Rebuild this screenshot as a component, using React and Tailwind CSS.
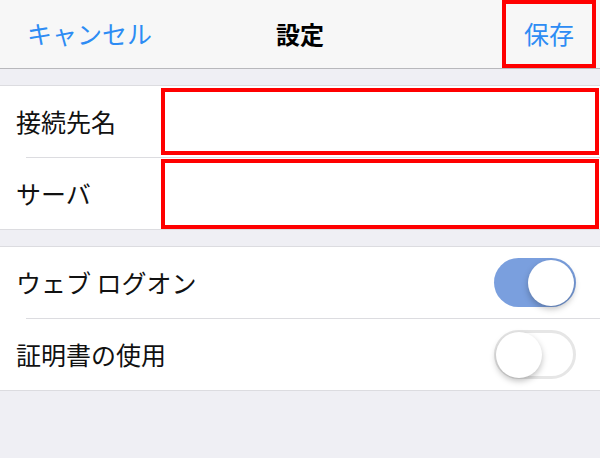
import React, { useState } from "react";

const FONT = { fontFamily: '"Noto Sans CJK JP", "Noto Sans", sans-serif' };

const Toggle = ({ on, onChange }) => (
  <button
    onClick={() => onChange(!on)}
    className={`relative w-[82px] h-[49px] rounded-full shrink-0 ${
      on ? "bg-[#7a9fde]" : "bg-white border-[3px] border-[#e6e6e6]"
    }`}
  >
    <span
      className={`absolute top-1/2 -translate-y-1/2 w-[46px] h-[46px] rounded-full bg-white shadow-[0_3px_6px_rgba(0,0,0,0.25)] ${
        on ? "right-[2px]" : "left-[-1px]"
      }`}
    ></span>
  </button>
);

export default function App() {
  const [webLogon, setWebLogon] = useState(true);
  const [useCert, setUseCert] = useState(false);

  return (
    <div className="w-[600px] h-[458px] bg-[#efeff4] overflow-hidden" style={FONT}>
      {/* Nav bar */}
      <div className="relative h-[69px] bg-[#f7f7f7] border-b border-[#b8b8bc] flex items-center justify-between">
        <button className="pl-[27px] text-[25px] text-[#2d8cf4]">キャンセル</button>
        <h1 className="absolute left-1/2 -translate-x-1/2 text-[24px] font-bold text-black">設定</h1>
        <button className="w-[94px] h-[68px] mr-[4px] self-start border-[4px] border-[#ff0000] text-[25px] text-[#2d8cf4] flex items-center justify-center">
          保存
        </button>
      </div>

      <div className="h-[16px]"></div>

      {/* Connection group */}
      <div className="bg-white border-y border-[#dcdce0]">
        <div className="h-[71px] flex items-center">
          <span className="w-[161px] pl-[16px] text-[25px] text-[#111]">接続先名</span>
          <input className="flex-1 h-[67px] mr-[1px] border-[4px] border-[#ff0000] outline-none" />
        </div>
        <div className="ml-[26px] h-px bg-[#dcdce0]"></div>
        <div className="h-[71px] flex items-center">
          <span className="w-[161px] pl-[16px] text-[25px] text-[#111]">サーバ</span>
          <input className="flex-1 h-[70px] mr-[1px] border-[4px] border-[#ff0000] outline-none" />
        </div>
      </div>

      <div className="h-[16px]"></div>

      {/* Options group */}
      <div className="bg-white border-y border-[#dcdce0]">
        <div className="h-[71px] flex items-center justify-between pl-[16px] pr-[24px]">
          <span className="text-[25px] text-[#111]">ウェブ ログオン</span>
          <Toggle on={webLogon} onChange={setWebLogon} />
        </div>
        <div className="ml-[26px] h-px bg-[#dcdce0]"></div>
        <div className="h-[71px] flex items-center justify-between pl-[16px] pr-[24px]">
          <span className="text-[25px] text-[#111]">証明書の使用</span>
          <Toggle on={useCert} onChange={setUseCert} />
        </div>
      </div>
    </div>
  );
}
